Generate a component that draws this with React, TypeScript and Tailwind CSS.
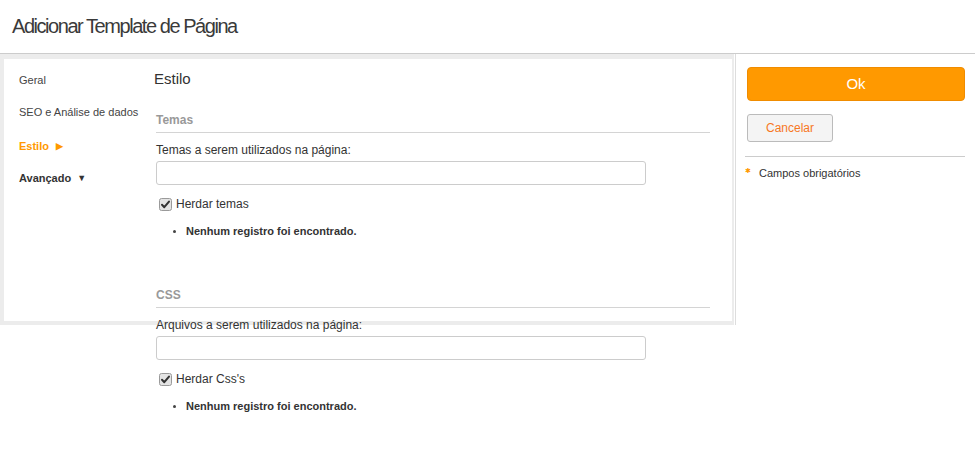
import * as React from "react";

function CheckBox() {
  return (
    <svg width="13" height="13" viewBox="0 0 13 13" className="shrink-0">
      <rect x="0.5" y="0.5" width="12" height="12" rx="2" fill="#e4e4e4" stroke="#9a9a9a" />
      <path d="M3 6.8 L5.3 9.2 L10 3.6" fill="none" stroke="#333" strokeWidth="2" strokeLinecap="round" strokeLinejoin="round" />
    </svg>
  );
}

type SectionProps = { title: string; label: string; check: string; last?: boolean };

function Section({ title, label, check, last }: SectionProps) {
  return (
    <section className={last ? "ml-[2px] mt-[49px]" : "ml-[2px] mt-[23px]"}>
      <h3 className="border-b border-[#d4d4d4] pb-[4px] text-[12px] font-bold leading-[16px] text-[#999]">{title}</h3>
      <label className="mt-[9px] block text-[12px] leading-[16px] text-[#333]">{label}</label>
      <input
        type="text"
        className="mt-[3px] block h-[24px] w-[490px] rounded-[3px] border border-[#ccc] bg-white px-2 text-[12px] outline-none"
      />
      <div className="mt-[11px] flex h-[16px] items-center gap-[4px] pl-[3px]">
        <CheckBox />
        <span className="text-[12px] leading-[16px] text-[#333]">{check}</span>
      </div>
      <ul className="mt-[12px] pl-[17px]">
        <li className="flex items-center text-[11px] font-bold leading-[14px] text-[#333]">
          <span className="mr-[10px] h-[3px] w-[3px] rounded-full bg-[#444]" />
          Nenhum registro foi encontrado.
        </li>
      </ul>
    </section>
  );
}

export default function App() {
  return (
    <div className="min-h-[463px] bg-white font-['Liberation_Sans',Arial,sans-serif] text-[#333]">
      <header className="h-[54px] border-b border-[#ccc] pl-[12px] pt-[14px]">
        <h1 className="text-[20px] leading-[24px] tracking-[-1.45px] text-[#3a3a3a]">Adicionar Template de Página</h1>
      </header>

      <div className="flex">
        <div className="h-[271px] w-[736px] shrink-0 border-r border-[#ddd] pr-[1px]">
          <div className="flex h-full border-b-4 border-l-4 border-r-2 border-t-[5px] border-[#ececec] bg-white">
            <nav className="w-[150px] shrink-0 pl-[15px] pt-[14px] text-[11px] leading-[14px]">
              <div className="h-[32px] text-[#444]">Geral</div>
              <div className="h-[34px] text-[#444]">SEO e Análise de dados</div>
              <div className="flex h-[32px] items-start gap-[7px] font-bold text-[#f90]">
                Estilo <span className="text-[9px] leading-[14px]">&#9654;</span>
              </div>
              <div className="flex items-start gap-[6px] font-bold text-[#333]">
                Avançado <span className="text-[9px] leading-[14px]">&#9660;</span>
              </div>
            </nav>

            <main className="flex-1 pr-[22px] pt-[10px]">
              <h2 className="text-[15px] leading-[20px] text-[#333]">Estilo</h2>
              <Section title="Temas" label="Temas a serem utilizados na página:" check="Herdar temas" />
              <Section title="CSS" label="Arquivos a serem utilizados na página:" check="Herdar Css's" last />
            </main>
          </div>
        </div>

        <aside className="flex-1 pl-[11px] pr-[10px] pt-[13px]">
          <button
            type="button"
            className="block h-[34px] w-full rounded-[4px] border border-[#f08c00] bg-[#ff9900] text-[15px] text-white"
          >
            Ok
          </button>
          <button
            type="button"
            className="mt-[13px] block h-[28px] w-[86px] rounded-[3px] border border-[#bbb] bg-[#f4f4f4] text-[12px] text-[#f7781f]"
          >
            Cancelar
          </button>
          <div className="-ml-[2px] mt-[14px] border-t border-[#ccc]" />
          <p className="-ml-[2px] mt-[9px] flex items-center text-[11px] leading-[14px] text-[#333]">
            <span className="-mt-[4px] mr-[8px] text-[7px] text-[#f90]">&#10033;</span>
            Campos obrigatórios
          </p>
        </aside>
      </div>
    </div>
  );
}
